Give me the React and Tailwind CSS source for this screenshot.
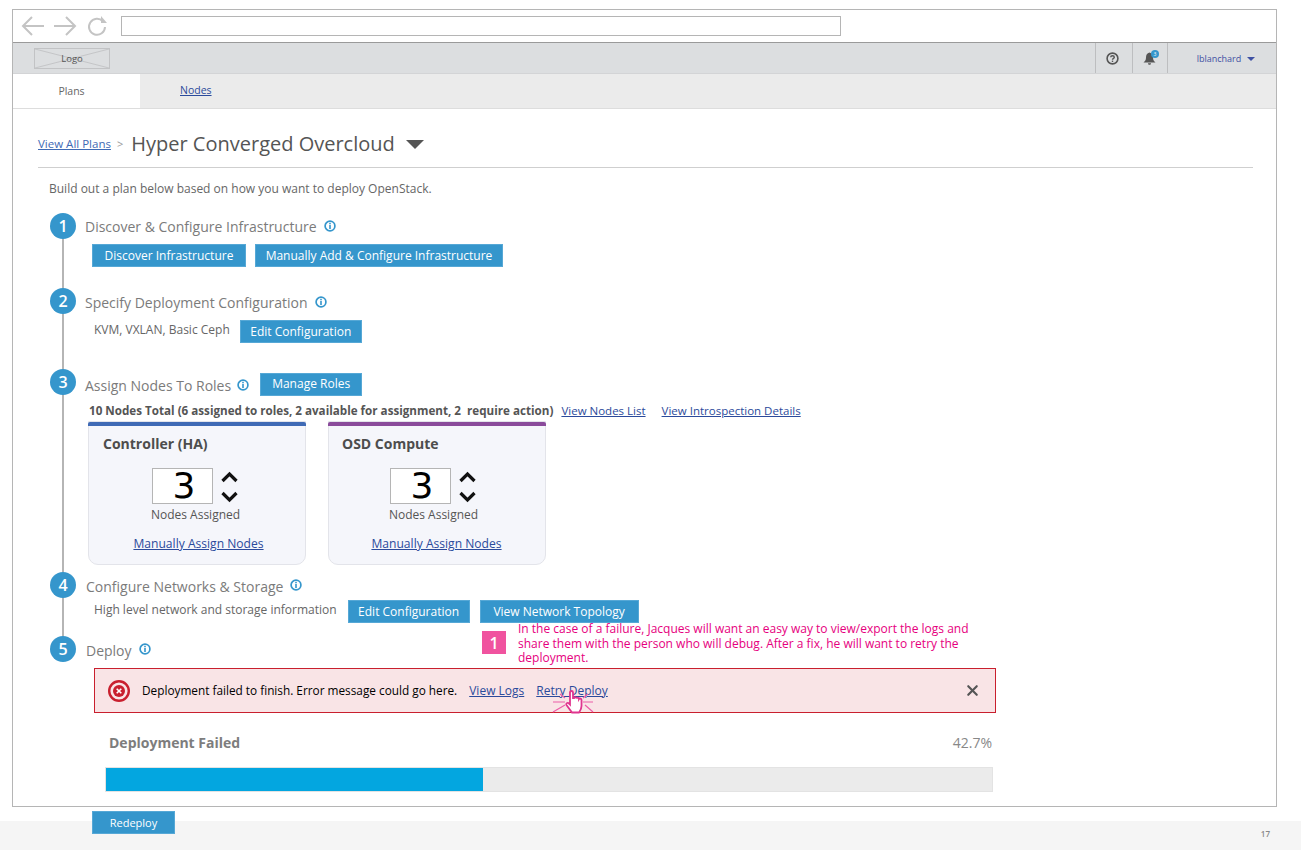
import { X } from "lucide-react";

const font = { fontFamily: '"Open Sans", sans-serif' };

function Button({ children, className = "", textClass = "text-[12px]" }) {
  return (
    <button className={`h-[23px] bg-[#3596cc] border border-[#56a8d6] text-white leading-none whitespace-nowrap ${textClass} ${className}`}>
      {children}
    </button>
  );
}

function Info() {
  return (
    <svg width="12" height="12" viewBox="0 0 12 12" className="shrink-0">
      <circle cx="6" cy="6" r="4.9" fill="none" stroke="#3596cc" strokeWidth="1.7" />
      <rect x="5.2" y="2.8" width="1.6" height="1.5" fill="#3596cc" />
      <rect x="5.2" y="5" width="1.6" height="4" fill="#3596cc" />
    </svg>
  );
}

function StepHeader({ n, title, titleClass = "ml-[9px]", infoClass = "ml-[7px]", children }) {
  return (
    <div className="flex items-center h-[26px]">
      <div className="w-[26px] h-[26px] rounded-full bg-[#3596cc] text-white text-[16px] font-semibold flex items-center justify-center shrink-0 relative z-10">
        {n}
      </div>
      <span className={`${titleClass} text-[14px] text-[#7b7b7b] whitespace-nowrap`}>{title}</span>
      <span className={infoClass}>
        <Info />
      </span>
      {children}
    </div>
  );
}

function RoleCard({ title, barClass, titleClass = "pl-[14px]", contentClass = "" }) {
  return (
    <div className="w-[218px] h-[144px] bg-[#f5f6fb] border border-[#e3e4ea] rounded-b-[10px]">
      <div className={`h-[4px] -mx-px rounded-t-[2px] ${barClass}`}></div>
      <div className={`${titleClass} pt-[8px] text-[14px] leading-[20px] font-bold text-[#4d4d4d]`}>{title}</div>
      <div className={contentClass}>
        <div className="flex justify-center mt-[14px] mr-[4px]">
          <div className="w-[61px] h-[36px] bg-white border border-[#b5b5b5] text-[36px] leading-[34px] text-black text-center pl-[3px]" style={{ fontFamily: '"DejaVu Sans", sans-serif' }}>
            3
          </div>
          <svg width="17" height="32" viewBox="0 0 17 32" className="ml-[8px] mt-[3px]" fill="none" stroke="#111" strokeWidth="3.2">
            <path d="M1.5 10 L8.5 3 L15.5 10" />
            <path d="M1.5 22 L8.5 29 L15.5 22" />
          </svg>
        </div>
        <div className="text-center text-[12px] leading-[16px] text-[#555] mt-[3px] pr-[3px]">Nodes Assigned</div>
        <div className="text-center mt-[7px] pl-[3px]">
          <a className="text-[12.1px] leading-[16px] text-[#2b4a9b] underline">Manually Assign Nodes</a>
        </div>
      </div>
    </div>
  );
}

function Cursor() {
  return (
    <svg width="44" height="26" viewBox="0 0 44 26" className="absolute left-[552px] top-[689px] z-20">
      <g stroke="#ec5ca8" strokeWidth="1.2" fill="none">
        <path d="M1 13 H13 M1 23 L13 16 M31 13 H41 M33 16 L41 23 M8 5 L13 9 M31 9 L36 5" />
      </g>
      <path
        d="M18 3.5 C18 1.5 21 1.5 21 3.5 V9 L22 9 C22 7.8 24.5 7.8 24.5 9.5 C24.8 8.4 27 8.4 27 10 C27.5 9.2 29.5 9.4 29.5 11 V17 C29.5 20 28 22 27 23.5 H20 L14.5 16 C13.5 14.5 15.5 13 17 14.5 L18 15.5 Z"
        fill="#fff"
        stroke="#e0358f"
        strokeWidth="1.8"
      />
    </svg>
  );
}

export default function App() {
  return (
    <div className="relative w-[1301px] h-[850px] bg-white overflow-hidden" style={font}>
      <div className="pt-[9px] pl-[12px]">
        <div className="w-[1265px] h-[798px] border border-[#b5b5b5] bg-white">
          {/* browser chrome */}
          <div className="h-[33px] flex items-center border-b border-[#9a9a9a]">
            <svg width="90" height="22" viewBox="0 0 90 22" className="ml-[8px] mt-[-1px]" fill="none" stroke="#c4c4c4" strokeWidth="2">
              <path d="M23 11 H2 M11 2 L2 11 L11 20" />
              <path d="M33 11 H54 M45 2 L54 11 L45 20" />
              <path d="M82 6.5 A8 8 0 1 0 84 12" />
              <path d="M80 1 L80 8 L86 8 Z" fill="#c4c4c4" stroke="none" />
            </svg>
            <div className="ml-[10px] w-[720px] h-[20px] border border-[#b5b5b5] bg-white"></div>
          </div>
          {/* app header */}
          <div className="h-[31px] bg-[#dcdee0] border-b border-[#d3d4d6] flex items-stretch">
            <div className="ml-[21px] mt-[5px] w-[76px] h-[21px] relative border border-[#c2c3c5] flex items-center justify-center">
              <svg className="absolute inset-0 w-full h-full" viewBox="0 0 76 21" preserveAspectRatio="none">
                <path d="M0 0 L76 21 M76 0 L0 21" stroke="#c2c3c5" strokeWidth="1" />
              </svg>
              <span className="relative text-[9.5px] text-[#555] mt-[2px]">Logo</span>
            </div>
            <div className="flex-1"></div>
            <div className="w-[37px] border-l border-[#bdbec0] flex items-center justify-center pr-[4px]">
              <svg width="13" height="13" viewBox="0 0 13 13">
                <circle cx="6.5" cy="6.5" r="5.4" fill="none" stroke="#555" strokeWidth="1.6" />
                <path d="M4.7 5.2 C4.7 3.2 8.3 3.2 8.3 5.2 C8.3 6.5 6.5 6.4 6.5 7.8" fill="none" stroke="#555" strokeWidth="1.4" />
                <rect x="5.8" y="8.6" width="1.4" height="1.4" fill="#555" />
              </svg>
            </div>
            <div className="w-[35px] border-l border-[#bdbec0] flex items-center justify-center relative pr-[2px]">
              <svg width="13" height="13" viewBox="0 0 13 13">
                <path d="M6.5 0.5 C9 1 10 3 10 5.5 C10 8 11 9 12.5 10.5 H0.5 C2 9 3 8 3 5.5 C3 3 4 1 6.5 0.5 Z" fill="#555" />
                <path d="M5 11.2 H8 C8 13.2 5 13.2 5 11.2 Z" fill="#555" />
              </svg>
              <span className="absolute top-[7px] left-[18px] w-[8px] h-[8px] rounded-full bg-[#3596cc] text-white text-[5px] leading-[8px] text-center">3</span>
            </div>
            <div className="w-[109px] border-l border-[#bdbec0] flex items-center justify-center gap-[6px] pl-[8px]">
              <span className="text-[9px] text-[#3f51a3] mt-[2px]">lblanchard</span>
              <span className="w-0 h-0 border-x-[4px] border-x-transparent border-t-[4px] border-t-[#3f51a3] mt-[1px]"></span>
            </div>
          </div>
          {/* tabs */}
          <div className="h-[35px] bg-[#ebebeb] border-b border-[#dddddd] flex">
            <div className="w-[127px] bg-white flex items-center justify-center text-[10.5px] text-[#666] pt-[1px] pr-[10px]">Plans</div>
            <a className="ml-[40px] self-center text-[10.5px] text-[#2b4a9b] underline -mt-[1px]">Nodes</a>
          </div>
          {/* page body */}
          <div className="relative">
            <div className="ml-[25px] mr-[23px] h-[59px] border-b border-[#cfcfcf] flex items-center pt-[12px]">
              <a className="text-[11.5px] text-[#3f6ab5] underline">View All Plans</a>
              <span className="ml-[6px] text-[11px] text-[#999]">&gt;</span>
              <span className="ml-[8px] text-[20px] text-[#555] whitespace-nowrap">Hyper Converged Overcloud</span>
              <span className="ml-[11px] w-0 h-0 border-x-[9px] border-x-transparent border-t-[9px] border-t-[#555]"></span>
            </div>
            <p className="ml-[36px] mt-[12px] text-[12px] leading-[18px] text-[#666]">
              Build out a plan below based on how you want to deploy OpenStack.
            </p>
            <div className="relative ml-[37px] mt-[15px]">
              <div className="absolute left-[12px] top-[13px] h-[430px] w-[2px] bg-[#b5b5b5]"></div>
              {/* step 1 */}
              <div className="h-[75px] relative">
                <StepHeader n="1" title="Discover & Configure Infrastructure" />
                <div className="flex gap-[9px] ml-[42px] mt-[5px]">
                  <Button className="w-[154px]">Discover Infrastructure</Button>
                  <Button className="w-[248px]">Manually Add & Configure Infrastructure</Button>
                </div>
              </div>
              {/* step 2 */}
              <div className="h-[81px] relative">
                <StepHeader n="2" title="Specify Deployment Configuration" titleClass="ml-[9px] mt-[2px]" infoClass="ml-[7px] mt-[2px]" />
                <div className="flex ml-[44px] mt-[6px]">
                  <span className="text-[12px] leading-[19px] text-[#666]">KVM, VXLAN, Basic Ceph</span>
                  <Button className="w-[122px] ml-[10px]">Edit Configuration</Button>
                </div>
              </div>
              {/* step 3 */}
              <div className="h-[203px] relative">
                <StepHeader n="3" title="Assign Nodes To Roles" titleClass="ml-[9px] mt-[6px]" infoClass="ml-[6px] mt-[6px]">
                  <Button className="w-[102px] ml-[11px] mt-[4px]">Manage Roles</Button>
                </StepHeader>
                <div className="flex items-center h-[20px] ml-[39px] mt-[6px] text-[11.5px] whitespace-nowrap">
                  <span className="font-bold text-[#555] text-[11.65px]">10 Nodes Total (6 assigned to roles, 2 available for assignment, 2&nbsp; require action)</span>
                  <a className="ml-[8px] text-[#2b4a9b] underline">View Nodes List</a>
                  <a className="ml-[16px] text-[#2b4a9b] underline">View Introspection Details</a>
                </div>
                <div className="flex gap-[22px] ml-[38px]">
                  <RoleCard title="Controller (HA)" barClass="bg-[#3f6ab5]" />
                  <RoleCard title="OSD Compute" barClass="bg-[#8a4b9b]" titleClass="pl-[13px]" contentClass="-translate-x-[2px]" />
                </div>
              </div>
              {/* step 4 */}
              <div className="h-[64px] relative">
                <StepHeader n="4" title="Configure Networks & Storage" titleClass="ml-[10px] mt-[2px]" />
                <div className="flex ml-[44px] mt-[2px]">
                  <span className="text-[12px] leading-[20px] text-[#666]">High level network and storage information</span>
                  <Button className="w-[122px] ml-[11px]">Edit Configuration</Button>
                  <Button className="w-[159px] ml-[10px]">View Network Topology</Button>
                </div>
              </div>
              {/* step 5 */}
              <StepHeader n="5" title="Deploy" titleClass="ml-[10px] mt-[2px]" />
              <div className="ml-[44px] mt-[6px] w-[902px] h-[45px] border border-[#c91f2e] bg-[#f9e4e6] flex items-center text-[12px]">
                <svg width="24" height="24" viewBox="0 0 24 24" className="ml-[12px]">
                  <circle cx="12" cy="12" r="9.8" fill="none" stroke="#c91f2e" strokeWidth="2.4" />
                  <circle cx="12" cy="12" r="6" fill="#c91f2e" />
                  <path d="M9.7 9.7 L14.3 14.3 M14.3 9.7 L9.7 14.3" stroke="#fff" strokeWidth="1.6" />
                </svg>
                <span className="ml-[11px] text-[11.8px] text-black whitespace-nowrap">Deployment failed to finish. Error message could go here.</span>
                <a className="ml-[12px] text-[#2b4a9b] underline">View Logs</a>
                <a className="ml-[12px] text-[#2b4a9b] underline">Retry Deploy</a>
                <X size={17} strokeWidth={3} className="ml-auto mr-[14px] text-[#555]" />
              </div>
              <div className="flex justify-between items-center w-[887px] ml-[55px] mt-[19px] h-[20px]">
                <span className="ml-[4px] text-[14px] font-bold text-[#7d7d7d]">Deployment Failed</span>
                <span className="text-[14px] text-[#888]">42.7%</span>
              </div>
              <div className="ml-[55px] mt-[15px] w-[888px] h-[25px] bg-[#ebebeb] border border-[#e3e3e3]">
                <div className="h-full bg-[#03a6e0]" style={{ width: "42.5%" }}></div>
              </div>
              <Button className="w-[83px] ml-[42px] mt-[19px] relative z-10" textClass="text-[11px]">Redeploy</Button>
            </div>
          </div>
        </div>
      </div>
      {/* footer */}
      <div className="mt-[14px] h-[29px] bg-[#f5f5f5] flex items-center justify-end pr-[31px]">
        <span className="text-[8px] font-semibold text-[#888] -mt-[4px]">17</span>
      </div>
      {/* annotation */}
      <div className="absolute left-[482px] top-[631px] w-[24px] h-[23px] bg-[#f0539f] text-white text-[16px] font-semibold flex items-center justify-center z-20">1</div>
      <p className="absolute left-[518px] top-[622px] w-[465px] text-[12px] leading-[14.5px] text-[#e6007e] z-20">
        In the case of a failure, Jacques will want an easy way to view/export the logs and share them with the person who will debug. After a fix, he will want to retry the deployment.
      </p>
      <Cursor />
    </div>
  );
}
